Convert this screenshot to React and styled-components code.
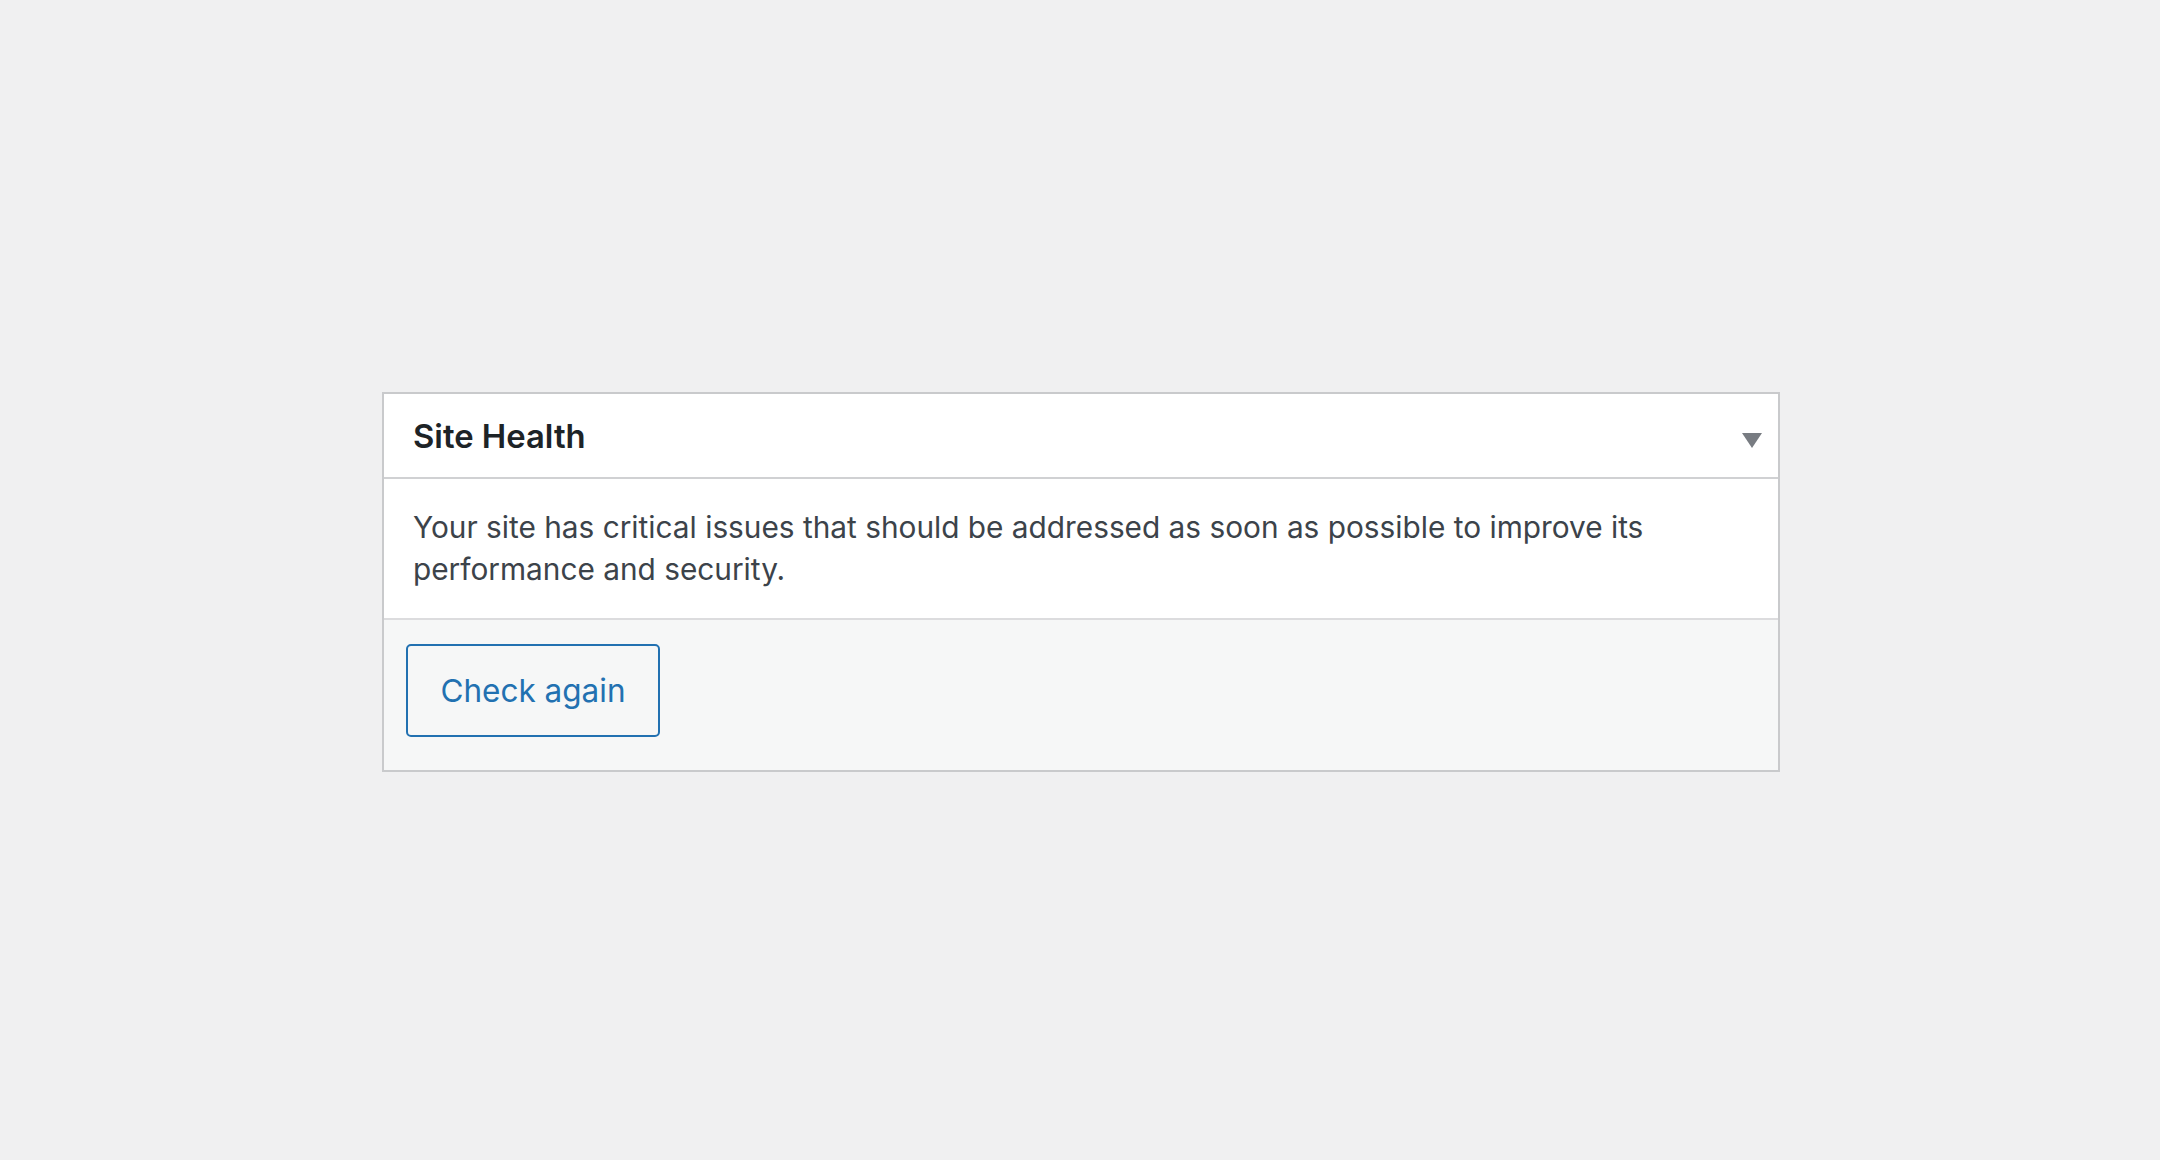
import React from "react";
import styled, { createGlobalStyle } from "styled-components";

const GlobalStyle = createGlobalStyle`
  html, body {
    margin: 0;
    padding: 0;
    background: #f0f0f1;
  }
  body {
    font-family: Inter, "Liberation Sans", sans-serif;
    -webkit-font-smoothing: antialiased;
  }
`;

const Page = styled.div`
  width: 2160px;
  height: 1160px;
  box-sizing: border-box;
  padding: 392px 0 0 382px;
  background: #f0f0f1;
`;

const Widget = styled.section`
  width: 1398px;
  box-sizing: border-box;
  background: #ffffff;
  border: 2px solid #c9cacc;
`;

const Header = styled.div`
  height: 85px;
  box-sizing: border-box;
  display: flex;
  align-items: center;
  justify-content: space-between;
  padding: 0 11px 0 29px;
  border-bottom: 2px solid #d0d1d3;
`;

const Title = styled.h2`
  margin: 0;
  font-size: 32.8px;
  font-weight: 600;
  color: #1d2327;
  letter-spacing: 0;
`;

const Toggle = styled.button`
  display: flex;
  align-items: center;
  justify-content: center;
  width: 30px;
  height: 30px;
  padding: 0;
  margin-top: 10px;
  border: none;
  background: none;
  cursor: pointer;
`;

const Body = styled.div`
  padding: 27px 29px 28px;
  font-size: 29.8px;
  line-height: 42px;
  color: #3c434a;
`;

const Footer = styled.div`
  padding: 24px 22px 33px;
  background: #f6f7f7;
  border-top: 2px solid #dcdcde;
`;

const Button = styled.button`
  width: 254px;
  height: 93px;
  box-sizing: border-box;
  border: 2px solid #2271b1;
  border-radius: 5px;
  background: #f6f7f7;
  color: #2271b1;
  font-family: Inter, "Liberation Sans", sans-serif;
  font-size: 31.5px;
  cursor: pointer;
`;

export default function App() {
  return (
    <>
      <GlobalStyle />
      <Page>
        <Widget>
          <Header>
            <Title>Site Health</Title>
            <Toggle aria-label="Toggle panel">
              <svg width="20" height="15" viewBox="0 0 20 15">
                <polygon points="0,0 20,0 10,15" fill="#787c82" />
              </svg>
            </Toggle>
          </Header>
          <Body>
            Your site has critical issues that should be addressed as soon as
            possible to improve its performance and security.
          </Body>
          <Footer>
            <Button>Check again</Button>
          </Footer>
        </Widget>
      </Page>
    </>
  );
}
